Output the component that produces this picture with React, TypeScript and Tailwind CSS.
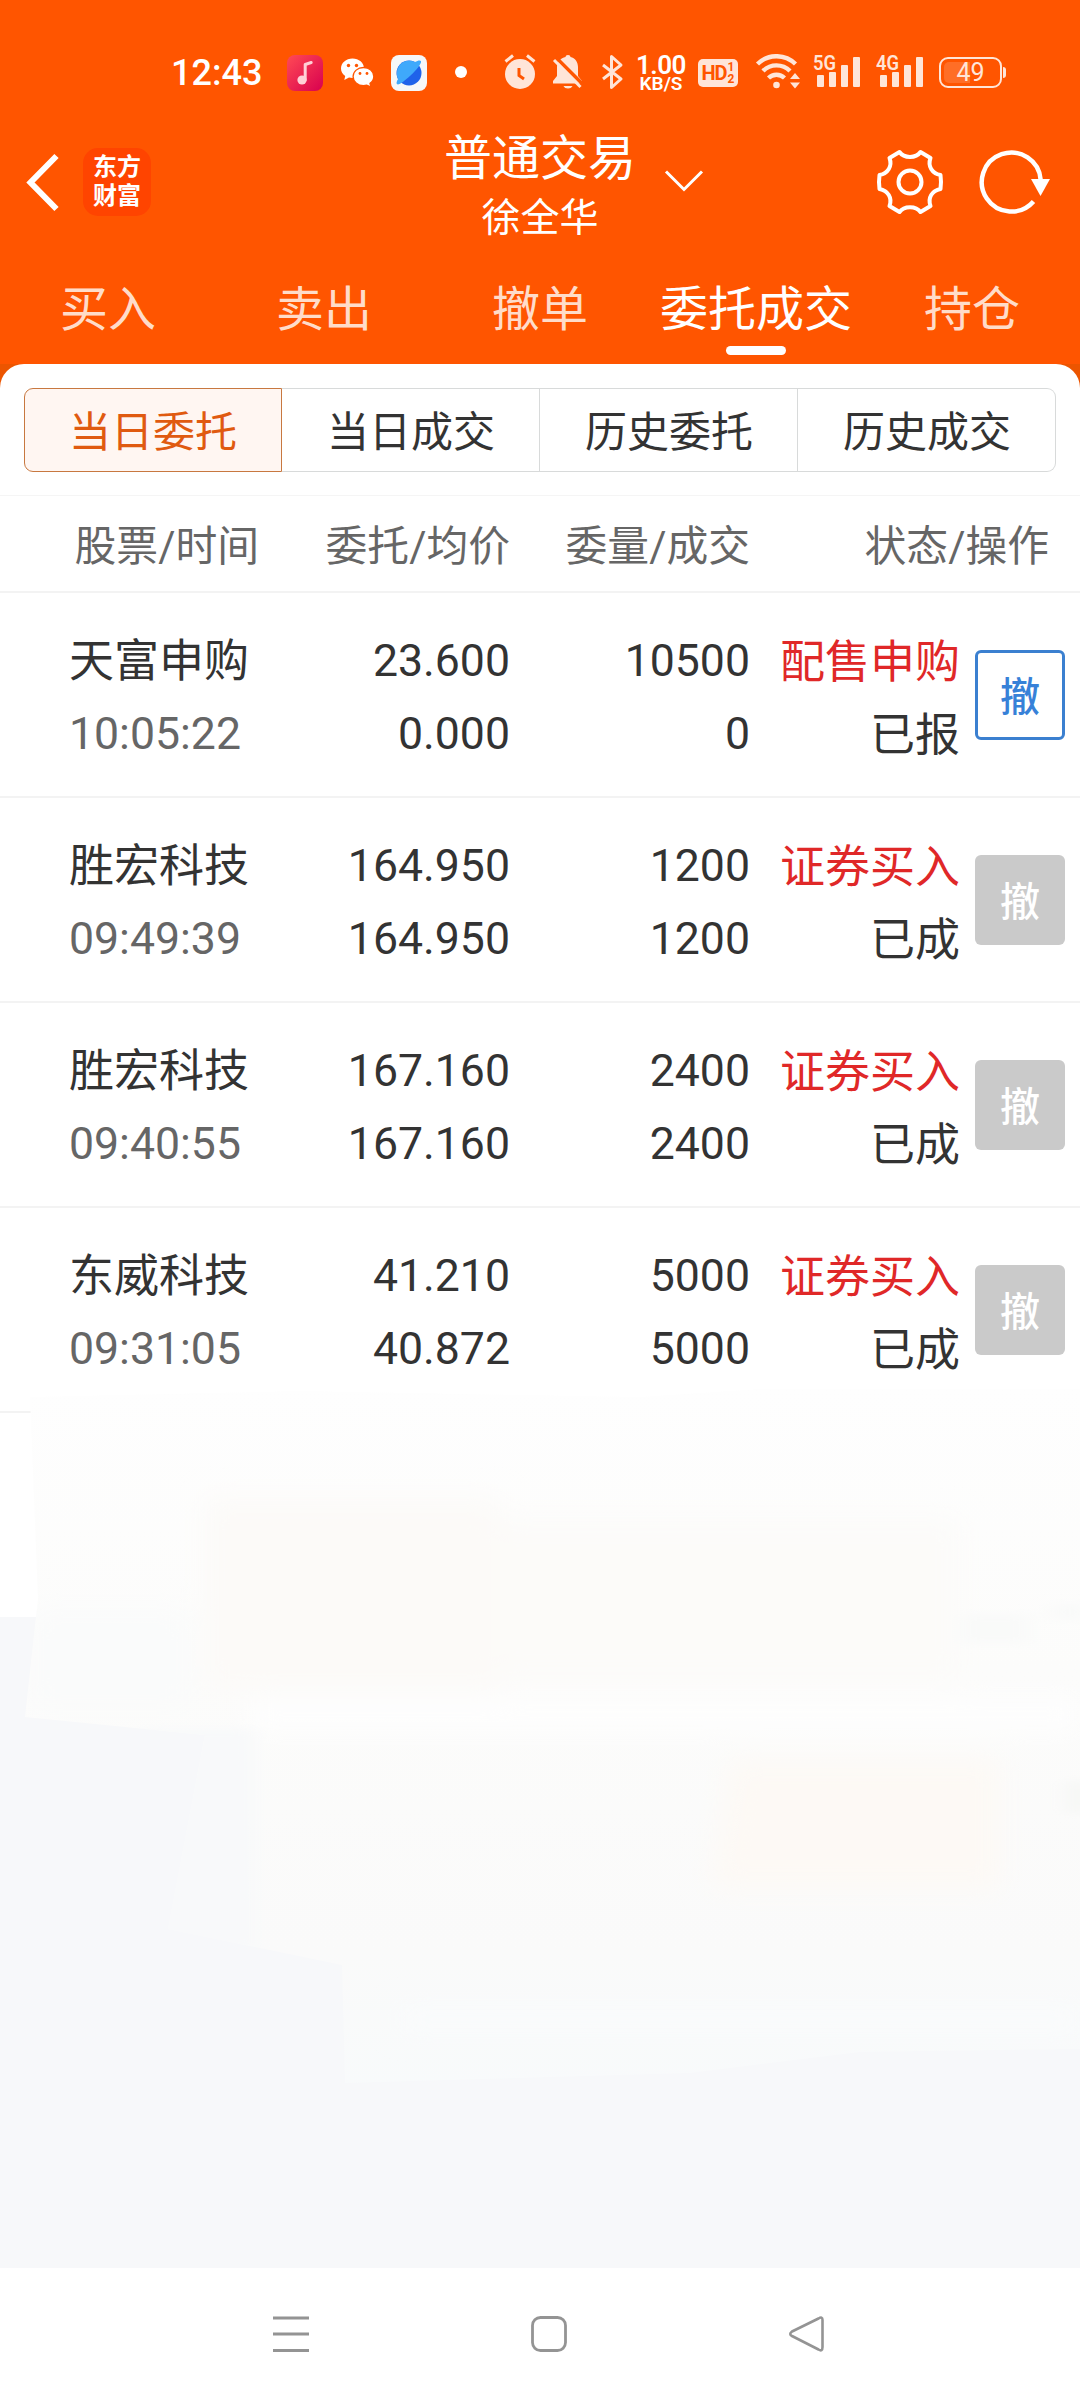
import React from 'react';

type Order = {
  name: string;
  time: string;
  price: string;
  avg: string;
  qty: string;
  filled: string;
  side: string;
  status: string;
  canCancel?: boolean;
};

const tabs = ['买入', '卖出', '撤单', '委托成交', '持仓'];
const segments = ['当日委托', '当日成交', '历史委托', '历史成交'];

const orders: Order[] = [
  { name: '天富申购', time: '10:05:22', price: '23.600', avg: '0.000', qty: '10500', filled: '0', side: '配售申购', status: '已报', canCancel: true },
  { name: '胜宏科技', time: '09:49:39', price: '164.950', avg: '164.950', qty: '1200', filled: '1200', side: '证券买入', status: '已成' },
  { name: '胜宏科技', time: '09:40:55', price: '167.160', avg: '167.160', qty: '2400', filled: '2400', side: '证券买入', status: '已成' },
  { name: '东威科技', time: '09:31:05', price: '41.210', avg: '40.872', qty: '5000', filled: '5000', side: '证券买入', status: '已成' },
];

function Signal({ label }: { label: string }) {
  return (
    <svg className="-mt-[6px]" width="49" height="42" viewBox="0 -6 49 42" fill="#ffe5d8">
      <text x="0" y="16" fontSize="21" fontWeight="600" fontFamily="Roboto, sans-serif" textLength="23" lengthAdjust="spacingAndGlyphs">{label}</text>
      <rect x="4" y="21" width="7" height="12" rx="1" />
      <rect x="16" y="18" width="7" height="15" rx="1" />
      <rect x="28" y="11" width="7" height="22" rx="1" />
      <rect x="40" y="3" width="7" height="30" rx="1" />
    </svg>
  );
}

function StatusBar() {
  return (
    <div className="h-[122px] pt-[54px] pl-[171px] flex items-start text-white">
      <span className="w-[116px] pt-px text-[36px] leading-[36px] font-medium">12:43</span>

      {/* music */}
      <svg className="mt-px" width="36" height="36" viewBox="0 0 36 36">
        <defs>
          <linearGradient id="music" x1="0" y1="0" x2="1" y2="1">
            <stop offset="0" stopColor="#ff4a55" />
            <stop offset="1" stopColor="#d8004f" />
          </linearGradient>
        </defs>
        <rect width="36" height="36" rx="8" fill="url(#music)" />
        <circle cx="15" cy="25" r="4.6" fill="#ffd0d6" />
        <path d="M18.200 25V9.500l6-2" fill="none" stroke="#ffd0d6" strokeWidth="3" strokeLinejoin="round" strokeLinecap="round" />
      </svg>

      {/* chat bubbles */}
      <svg className="ml-[17px]" width="36" height="36" viewBox="0 0 36 36">
        <path d="M12.500 4.500C6.100 4.500 1 8.900 1 14.400c0 3.100 1.600 5.700 4.200 7.500L4.300 26l4.700-2.400c1.100.3 2.300.5 3.500.5 6.400 0 11.500-4.400 11.500-9.800S18.900 4.500 12.500 4.500z" fill="#fff" />
        <path d="M23.500 13.500c-5.800 0-10.400 4-10.400 9s4.600 9.100 10.400 9.100c1.200 0 2.300-.2 3.300-.5L31 33l-1-3.600c2.300-1.600 3.800-4.100 3.800-6.900 0-5-4.600-9-10.300-9z" fill="#fff" stroke="#ff5500" strokeWidth="1.300" />
        <g fill="#ff5500">
          <circle cx="8.500" cy="11.500" r="1.700" />
          <circle cx="16.500" cy="11.500" r="1.700" />
          <circle cx="20" cy="19.500" r="1.400" />
          <circle cx="27" cy="19.500" r="1.400" />
        </g>
      </svg>

      {/* browser */}
      <svg className="ml-[15px] mt-px" width="36" height="36" viewBox="0 0 36 36">
        <rect width="36" height="36" rx="8" fill="#f6f7f8" />
        <circle cx="18" cy="18" r="12.500" fill="#1f62ea" />
        <path d="M10 27.600A12.500 12.500 0 0 1 24 7.100C27 5.200 29.500 5 30 6.300c.8 2-4.500 9-10.500 14.200C14 25.500 8 30.400 6.200 29.300c-1.300-.8-.6-3 1-5.500z" fill="#3fa9fb" />
      </svg>

      <span className="ml-[28px] mt-[12px] size-[12px] rounded-full bg-white" />

      {/* alarm */}
      <svg className="ml-[37px]" width="32" height="36" viewBox="0 0 32 36">
        <circle cx="16" cy="20" r="15" fill="#ffe5d8" />
        <path d="M1.500 7.500l7.500-6M30.500 7.500l-7.500-6" stroke="#ffe5d8" strokeWidth="3" />
        <path d="M15 14v7.500l5 3.500" fill="none" stroke="#ff5500" strokeWidth="3" />
      </svg>

      {/* muted bell */}
      <svg className="ml-[16px]" width="32" height="36" viewBox="0 0 32 36">
        <path d="M16 1c1.600 0 2.300.8 2.500 2 4.700 1.200 7.500 5 7.500 10v9l4 5v2.500H1V27l4-5v-9C5 8 8.800 4.200 13.500 3c.2-1.200.9-2 2.500-2z" fill="#ffe5d8" />
        <path d="M11.500 32h9c-.8 1.700-2.300 2.500-4.500 2.500s-3.700-.8-4.500-2.500z" fill="#ffe5d8" />
        <path d="M4 3.500L31 30.500" stroke="#ff5500" strokeWidth="3.500" />
        <path d="M2 6L28.500 33" stroke="#ffe5d8" strokeWidth="3" />
      </svg>

      {/* bluetooth */}
      <svg className="ml-[16px]" width="26" height="36" viewBox="0 0 26 36">
        <path d="M3 11l18 14-9.500 8.500v-31L21 11 3 25" fill="none" stroke="#ffe5d8" strokeWidth="3" strokeLinejoin="round" />
      </svg>

      <div className="ml-[10px] w-[50px] flex flex-col items-center font-semibold">
        <span className="text-[26px] leading-[22px] tracking-[-0.5px]">1.00</span>
        <span className="text-[19px] leading-[16px]">KB/S</span>
      </div>

      <div className="ml-[12px] mt-[5px] w-[40px] h-[28px] rounded-[5px] bg-[#ffe5d8] text-[#ff5500] flex items-center justify-center font-bold">
        <span className="text-[20px] leading-[28px] tracking-[-1px]">HD</span>
        <span className="flex flex-col text-[12px] leading-[12px] pl-px">
          <span>1</span>
          <span>2</span>
        </span>
      </div>

      {/* wifi */}
      <svg className="ml-[17px]" width="48" height="36" viewBox="0 0 48 36">
        <g fill="none" stroke="#ffe5d8" strokeWidth="4.400">
          <path d="M2.500 10a27 27 0 0 1 38 0" />
          <path d="M8 17a19 19 0 0 1 27 0" />
          <path d="M13.500 24a11.500 11.500 0 0 1 16 0" />
        </g>
        <circle cx="21.500" cy="31" r="3.300" fill="#ffe5d8" />
        <path d="M35 25l5-6 5 6zM35 28.500l5 6 5-6z" fill="#ffe5d8" />
      </svg>

      <span className="ml-[10px]"><Signal label="5G" /></span>
      <span className="ml-[14px]"><Signal label="4G" /></span>

      <div className="ml-[14px] mt-[3px] flex items-center">
        <div className="relative w-[63px] h-[31px] rounded-[9px] border-2 border-[#ffe5d8] flex items-center justify-center">
          <span className="absolute left-[3px] top-[3px] h-[21px] w-[26px] rounded-l-[5px] bg-white/15" />
          <span className="relative text-[25px] leading-[27px] text-[#ffe5d8]">49</span>
        </div>
        <span className="ml-px w-[3px] h-[11px] rounded-r bg-[#ffe5d8]" />
      </div>
    </div>
  );
}

function Header() {
  return (
    <header className="bg-[#ff5500] text-white">
      <StatusBar />

      <div className="h-[130px] flex items-start">
        <div className="w-[400px] pl-[25px] pt-[26px] flex items-center">
          <svg width="36" height="60" viewBox="0 0 36 60">
            <path d="M31.500 4L5.500 30.500 31.500 57" fill="none" stroke="#fff" strokeWidth="6" />
          </svg>
          <div className="ml-[22px] size-[68px] rounded-[15px] bg-[#ff4400] flex flex-col items-center justify-center text-[24px] leading-[29px] font-bold">
            <span>东方</span>
            <span>财富</span>
          </div>
        </div>

        <div className="w-[280px] flex flex-col items-center">
          <span className="mt-[3px] text-[48px] leading-[68px]">普通交易</span>
          <span className="-mt-px text-[39px] leading-[52px]">徐全华</span>
        </div>

        <div className="flex-1 flex">
          <svg className="mt-[46px] -ml-[17px]" width="42" height="26" viewBox="0 0 42 26">
            <path d="M3 3.500L21 21.500 39 3.500" fill="none" stroke="#fff" strokeWidth="3" />
          </svg>
          <svg className="ml-[170px] mt-[25px]" width="70" height="70" viewBox="-35 -35 70 70" fill="none" stroke="#fff" strokeWidth="4">
            <circle r="11.500" />
            <path d="M-10.500 -30C-6 -23.500 6 -23.500 10.500 -30L20.500 -24C17.500 -16 22 -8.500 30.500 -7Q31.500 0 30.500 7C22 8.500 17.500 16 20.500 24L10.500 30C6 23.500 -6 23.500 -10.500 30L-20.500 24C-17.500 16 -22 8.500 -30.500 7Q-31.500 0 -30.500 -7C-22 -8.500 -17.500 -16 -20.500 -24Z" strokeLinejoin="round" />
          </svg>
          <svg className="ml-[31px] mt-[25px]" width="76" height="70" viewBox="-35 -35 76 70">
            <path d="M22.500 19.500A29.500 29.500 0 1 1 29.700 -2" fill="none" stroke="#fff" strokeWidth="4.500" />
            <path d="M20 -3h19L29.500 14z" fill="#fff" />
          </svg>
        </div>
      </div>

      <nav className="h-[112px] grid grid-cols-5">
        {tabs.map((tab, i) => (
          <div key={tab} className="pt-[24px] flex flex-col items-center">
            <span className={`text-[48px] leading-[68px] whitespace-nowrap ${i === 3 ? 'text-white' : 'text-[#ffdcc9]'}`}>{tab}</span>
            {i === 3 && <span className="mt-[2px] w-[60px] h-[9px] rounded-full bg-white" />}
          </div>
        ))}
      </nav>
    </header>
  );
}

function OrderRow({ order }: { order: Order }) {
  return (
    <div className="h-[205px] border-b-2 border-[#f3f3f3] pt-[32px] flex items-start text-[44.6px] leading-[73px] text-[#333]">
      <div className="w-[270px] pl-[69px] flex flex-col whitespace-nowrap">
        <span className="text-[45px]">{order.name}</span>
        <span className="text-[#666]">{order.time}</span>
      </div>
      <div className="w-[240px] flex flex-col items-end">
        <span>{order.price}</span>
        <span>{order.avg}</span>
      </div>
      <div className="w-[240px] flex flex-col items-end">
        <span>{order.qty}</span>
        <span>{order.filled}</span>
      </div>
      <div className="w-[210px] pt-px flex flex-col items-end text-[45px]">
        <span className="text-[#e02828]">{order.side}</span>
        <span>{order.status}</span>
      </div>
      <button
        className={`ml-[15px] mt-[25px] pt-[5px] size-[90px] rounded-[6px] flex items-center justify-center text-[40px] leading-none font-medium ${
          order.canCancel ? 'border-3 border-[#3b80d0] bg-white text-[#3781d8]' : 'bg-[#cacaca] text-white'
        }`}
      >
        撤
      </button>
    </div>
  );
}

// Smeared area under the list
function Smudge() {
  return (
    <svg className="absolute left-0 -top-[24px]" width="1080" height="700" viewBox="0 0 1080 700">
      <defs>
        <filter id="soft" x="-20%" y="-20%" width="140%" height="140%">
          <feGaussianBlur stdDeviation="14" />
        </filter>
        <filter id="edge" x="-20%" y="-20%" width="140%" height="140%">
          <feGaussianBlur stdDeviation="10 4" />
        </filter>
        <linearGradient id="fade" x1="0" y1="0" x2="0" y2="1">
          <stop offset="0" stopColor="#fefefe" />
          <stop offset="0.400" stopColor="#fcfcfb" />
          <stop offset="0.800" stopColor="#fafafa" />
          <stop offset="1" stopColor="#f8fafb" />
        </linearGradient>
        <clipPath id="area">
          <path d="M30 8L300 2 640 8 760 0H1080V660L860 663 690 684 345 694 342 576 168 540 205 346 25 328 38 210z" />
        </clipPath>
      </defs>
      <g clipPath="url(#area)">
        <rect width="1080" height="700" fill="url(#fade)" />
        <g filter="url(#soft)">
          <path d="M205 110H500V300H205z" fill="#fcfaf8" />
          <path d="M500 130H960V290H500z" fill="#fcfbf9" />
          <path d="M730 370H1000V500H710z" fill="#fdf9f5" />
          <path d="M30 220H190V320H30z" fill="#fafbfb" />
          <path d="M250 310H1080V340H250z" fill="#fefefe" />
          <path d="M400 620H1080V640H400z" fill="#fafcfd" />
        </g>
        <g filter="url(#edge)">
          <path d="M140 340H255V560H140z" fill="#f8f9fa" />
          <path d="M960 225h70v30h-70zM1050 215h40v16h-40z" fill="#f9faf9" />
          <path d="M1066 392h24v32h-24z" fill="#f6f7f5" />
        </g>
      </g>
    </svg>
  );
}

export default function App() {
  return (
    <div className="w-[1080px] h-[2400px] flex flex-col overflow-hidden bg-white font-[Roboto,'Noto_Sans_CJK_SC',sans-serif]">
      <Header />

      <main className="bg-[#ec5500]">
        <div className="bg-white rounded-t-[24px]">
          <div className="h-[132px] pt-[24px] px-[24px] border-b border-[#f5f5f5]">
            <div className="h-[84px] grid grid-cols-4 text-[42px]">
              {segments.map((s, i) => (
                <div
                  key={s}
                  className={`pt-[4px] flex items-center justify-center border ${
                    i === 0 ? 'rounded-l-[9px] border-[#c87840] bg-[#fff6f2] text-[#e05a10]' : 'border-l-0 border-[#d8dada] text-[#333] pl-px'
                  } ${i === 3 ? 'rounded-r-[9px]' : ''}`}
                >
                  {s}
                </div>
              ))}
            </div>
          </div>

          <div className="h-[97px] border-b-2 border-[#f3f3f3] flex items-center text-[41.8px] text-[#666] pt-[7px]">
            <span className="w-[259px] text-right">股票/时间</span>
            <span className="w-[251px] text-right">委托/均价</span>
            <span className="w-[240px] text-right">委量/成交</span>
            <span className="w-[299px] text-right">状态/操作</span>
          </div>

          {orders.map((o) => (
            <OrderRow key={o.time} order={o} />
          ))}
        </div>
      </main>

      <div className="relative flex-1 bg-[#f7f8fa]">
        <div className="h-[204px] bg-white" />
        <Smudge />
      </div>

      <footer className="h-[132px] bg-white flex items-start pt-[46px] pl-[271px] gap-[218px]">
        <svg width="40" height="40" viewBox="0 0 40 40" stroke="#949494" strokeWidth="3">
          <path d="M2 4h36M2 20h36M2 36.500h36" />
        </svg>
        <svg width="40" height="40" viewBox="0 0 40 40" fill="none" stroke="#949494" strokeWidth="2.800">
          <rect x="3.500" y="3.500" width="33" height="33" rx="8" />
        </svg>
        <svg width="40" height="40" viewBox="0 0 40 40" fill="none" stroke="#949494" strokeWidth="2.600" strokeLinejoin="round">
          <path d="M31.500 4.500Q35.500 2 35.500 6V33Q35.500 38 31.500 35.500L5 22Q1.500 20 5 17.500Z" />
        </svg>
      </footer>
    </div>
  );
}
